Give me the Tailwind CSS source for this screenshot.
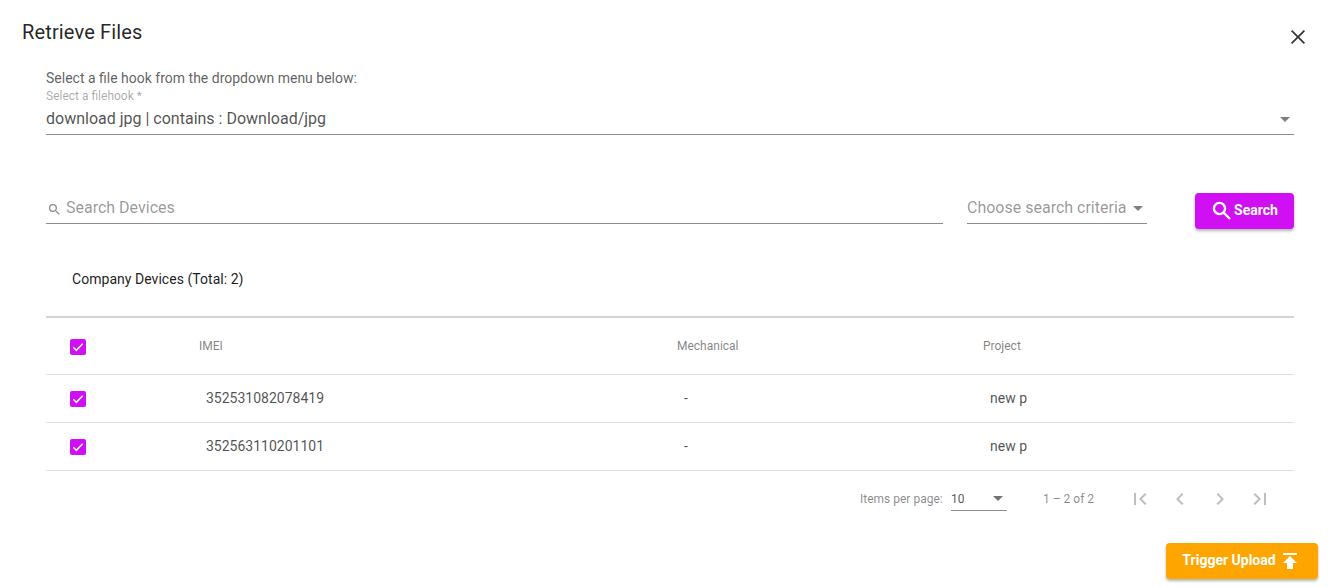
<!DOCTYPE html>
<html lang="en">
  <head>
    <meta charset="UTF-8" />
    <title>Retrieve Files</title>
    <script src="https://cdn.jsdelivr.net/npm/@tailwindcss/browser@4"></script>
  </head>
  <body class="bg-white font-['Roboto',sans-serif] w-[1334px] h-[587px] overflow-hidden">
    <!-- Header -->
    <div class="flex justify-between pl-[22px] pr-[24px] h-[68px]">
      <h2 class="text-[20px] leading-[32px] font-normal tracking-[0.15px] text-black/87 mt-[16px]">Retrieve Files</h2>
      <button class="w-6 h-6 mt-[25px] text-black/80">
        <svg viewBox="0 0 24 24" class="w-6 h-6" fill="none" stroke="currentColor" stroke-width="1.7"><path d="M5.6 5.6 18.4 18.4M18.4 5.6 5.6 18.4" /></svg>
      </button>
    </div>

    <div class="pl-[46px] pr-[40px]">
      <p class="text-[14px] leading-[20px] text-black/65 h-[20px]">Select a file hook from the dropdown menu below:</p>

      <!-- Filehook select -->
      <div class="border-b border-[#8c8c8c] h-[47px] relative">
        <div class="text-[12px] leading-[14px] text-black/35 pt-[1px]">Select a filehook *</div>
        <div class="flex items-center justify-between pr-[4px] mt-[6px]">
          <span class="text-[16px] leading-[20px] text-black/70">download jpg | contains : Download/jpg</span>
          <span class="w-0 h-0 border-x-[5px] border-x-transparent border-t-[5px] border-t-black/50"></span>
        </div>
      </div>

      <!-- Search row -->
      <div class="flex items-start mt-[58px] h-[36px]">
        <div class="w-[897px] h-[31px] border-b border-[#8c8c8c] flex items-center">
          <svg viewBox="0 0 24 24" class="w-[15px] h-[15px] ml-[1px] mr-[4px] mt-[3px] text-black/45" fill="currentColor"><path d="M15.5 14h-.79l-.28-.27A6.471 6.471 0 0 0 16 9.5 6.5 6.5 0 1 0 9.5 16c1.61 0 3.09-.59 4.23-1.57l.27.28v.79l5 4.99L20.49 19l-4.99-5zm-6 0C7.01 14 5 11.99 5 9.5S7.01 5 9.5 5 14 7.01 14 9.5 11.99 14 9.5 14z" /></svg>
          <span class="text-[16px] text-black/42">Search Devices</span>
        </div>
        <div class="w-[180px] h-[31px] ml-[24px] border-b border-[#8c8c8c] flex items-center">
          <span class="text-[16px] text-black/42">Choose search criteria</span>
          <span class="ml-[7px] w-0 h-0 border-x-[5px] border-x-transparent border-t-[5px] border-t-black/50"></span>
        </div>
        <button class="ml-[48px] w-[99px] h-[36px] bg-[#d00ff3] text-white rounded-[4px] shadow-[0_2px_3px_rgba(0,0,0,0.3)] flex items-center justify-center text-[14px] font-bold">
          <svg viewBox="0 0 24 24" class="w-[24px] h-[24px] -ml-[1px]" fill="none" stroke="currentColor" stroke-width="2.4"><circle cx="9.5" cy="9.5" r="5.6" /><path d="M13.6 13.6 20 20" /></svg>
          <span class="-mt-[2px]">Search</span>
        </button>
      </div>

      <!-- Table title -->
      <div class="h-[89px] border-b-2 border-[#d2d2d2] pl-[26px] pt-[40px]">
        <span class="text-[14px] leading-[20px] font-normal tracking-[0.04px] text-black/90 block">Company Devices (Total: 2)</span>
      </div>

      <!-- Table -->
      <div class="grid grid-cols-[153px_478px_306px_1fr] items-center h-[57px] border-b border-[#e0e0e0] text-[12px] text-black/50">
        <div class="pl-[24px]">
          <span class="flex w-4 h-4 rounded-[2px] bg-[#d00ff3] items-center justify-center mt-[2px]">
            <svg viewBox="0 0 24 24" class="w-[16px] h-[16px]" fill="none" stroke="white" stroke-width="2.2"><path d="M5 12.5l4.5 4.5L19 7" /></svg>
          </span>
        </div>
        <div>IMEI</div>
        <div>Mechanical</div>
        <div>Project</div>
      </div>
      <div class="grid grid-cols-[153px_478px_306px_1fr] items-center h-[48px] border-b border-[#e0e0e0] text-[14px] text-black/70">
        <div class="pl-[24px]">
          <span class="flex w-4 h-4 rounded-[2px] bg-[#d00ff3] items-center justify-center">
            <svg viewBox="0 0 24 24" class="w-[16px] h-[16px]" fill="none" stroke="white" stroke-width="2.2"><path d="M5 12.5l4.5 4.5L19 7" /></svg>
          </span>
        </div>
        <div class="pl-[7px]">352531082078419</div>
        <div class="pl-[7px]">-</div>
        <div class="pl-[7px]">new p</div>
      </div>
      <div class="grid grid-cols-[153px_478px_306px_1fr] items-center h-[48px] border-b border-[#e0e0e0] text-[14px] text-black/70">
        <div class="pl-[24px]">
          <span class="flex w-4 h-4 rounded-[2px] bg-[#d00ff3] items-center justify-center">
            <svg viewBox="0 0 24 24" class="w-[16px] h-[16px]" fill="none" stroke="white" stroke-width="2.2"><path d="M5 12.5l4.5 4.5L19 7" /></svg>
          </span>
        </div>
        <div class="pl-[7px]">352563110201101</div>
        <div class="pl-[7px]">-</div>
        <div class="pl-[7px]">new p</div>
      </div>

      <!-- Paginator -->
      <div class="flex items-center h-[56px] text-[12px] text-black/48 pl-[814px]">
        <span class="w-[91px]">Items per page:</span>
        <div class="w-[56px] h-[24px] border-b border-[#8c8c8c] flex items-center justify-between pr-[4px] text-black/70">
          <span>10</span>
          <span class="w-0 h-0 border-x-[5px] border-x-transparent border-t-[5px] border-t-black/55"></span>
        </div>
        <span class="ml-[36px] w-[85px]">1 – 2 of 2</span>
        <div class="flex text-black/26">
          <svg viewBox="0 0 24 24" class="w-[24px] h-[24px] mr-[16px]" fill="currentColor"><path d="M18.41 16.59 13.82 12l4.59-4.59L17 6l-6 6 6 6zM6 6h2v12H6z" /></svg>
          <svg viewBox="0 0 24 24" class="w-[24px] h-[24px] mr-[16px]" fill="currentColor"><path d="M15.41 7.41 14 6l-6 6 6 6 1.41-1.41L10.83 12z" /></svg>
          <svg viewBox="0 0 24 24" class="w-[24px] h-[24px] mr-[16px]" fill="currentColor"><path d="M10 6 8.59 7.41 13.17 12l-4.58 4.59L10 18l6-6z" /></svg>
          <svg viewBox="0 0 24 24" class="w-[24px] h-[24px]" fill="currentColor"><path d="M5.59 7.41 10.18 12l-4.59 4.59L7 18l6-6-6-6zM16 6h2v12h-2z" /></svg>
        </div>
      </div>
    </div>

    <!-- Footer action -->
    <div class="flex justify-end pr-[16px] pt-[16px]">
      <button class="w-[152px] h-[36px] bg-[#ffa500] text-white rounded-[4px] shadow-[0_2px_3px_rgba(0,0,0,0.3)] flex items-center justify-center text-[14px] font-bold">
        <span class="-mt-[2px]">Trigger Upload</span>
        <svg viewBox="0 0 24 24" class="w-[24px] h-[24px] ml-[2px]" fill="currentColor"><path d="M5 4v2h14V4H5zm0 10h4v6h6v-6h4l-7-7-7 7z" /></svg>
      </button>
    </div>
  </body>
</html>
